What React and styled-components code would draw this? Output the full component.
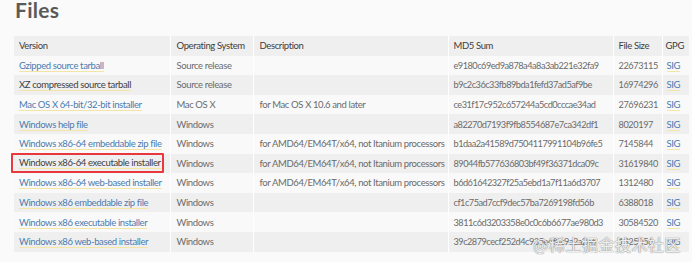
import React from 'react'
import styled, { createGlobalStyle } from 'styled-components'

const Global = createGlobalStyle`
  html, body { margin: 0; padding: 0; background: #fafafa; }
  body { font-family: Lato, "Liberation Sans", sans-serif; }
`

const Page = styled.div`
  width: 692px;
  height: 262px;
  overflow: hidden;
  position: relative;
  padding: 0 3px 0 14px;
  box-sizing: border-box;
`

const Title = styled.h2`
  margin: -3px 0 0 1px;
  height: 39px;
  font-size: 21px;
  line-height: 26px;
  font-weight: 700;
  color: #5a5a5a;
  letter-spacing: 0.3px;
`

const Table = styled.table`
  width: 675px;
  border-collapse: collapse;
  table-layout: fixed;
  font-size: 9.5px;
  letter-spacing: -0.38px;
`

const Row = styled.tr`
  height: 19.6px;
  background: ${p => (p.$shade ? '#efefef' : '#f9f9f9')};
`

const Head = styled.th`
  text-align: left;
  font-weight: 400;
  color: #3d3d3d;
  padding: 0 0 0 ${p => p.$pad || 5}px;
  border-left: 1px solid #fff;
  white-space: nowrap;
  &:first-child { border-left: none; }
`

const Cell = styled.td`
  color: #6b6b6b;
  padding: 0 0 0 ${p => p.$pad || 5}px;
  border-left: 1px solid #fff;
  white-space: nowrap;
  &:first-child { border-left: none; }
`

const NumCell = styled(Cell)`
  font-size: 9.2px;
  letter-spacing: ${p => (p.$tight ? '-0.5px' : '-0.4px')};
`

const Link = styled.a`
  color: ${p => (p.$visited ? '#3f3f3f' : '#4b7bb0')};
  text-decoration: none;
  border-bottom: 1px solid #f2e5a6;
`

const Marked = styled.span`
  display: inline-block;
  position: relative;
  line-height: 12px;
`

const RedBox = styled.span`
  position: absolute;
  left: -8px;
  right: -3px;
  top: -4px;
  bottom: -4px;
  border: 2px solid #e8383d;
  border-radius: 1px;
`

const Watermark = styled.div`
  position: absolute;
  right: 11px;
  bottom: 9px;
  font-family: "Noto Sans CJK SC", sans-serif;
  font-size: 16px;
  line-height: 18px;
  color: rgba(255, 255, 255, 0.85);
  letter-spacing: 0.5px;
  text-shadow: 0 0 1px #8a8a8a, 0 0 1px #8a8a8a;
`

const rows = [
  ['Gzipped source tarball', 'Source release', '', 'e9180c69ed9a878a4a8a3ab221e32fa9', '22673115'],
  ['XZ compressed source tarball', 'Source release', '', 'b9c2c36c33fb89bda1fefd37ad5af9be', '16974296', 'visited'],
  ['Mac OS X 64-bit/32-bit installer', 'Mac OS X', 'for Mac OS X 10.6 and later', 'ce31f17c952c657244a5cd0cccae34ad', '27696231'],
  ['Windows help file', 'Windows', '', 'a82270d7193f9fb8554687e7ca342df1', '8020197'],
  ['Windows x86-64 embeddable zip file', 'Windows', 'for AMD64/EM64T/x64, not Itanium processors', 'b1daa2a41589d7504117991104b96fe5', '7145844'],
  ['Windows x86-64 executable installer', 'Windows', 'for AMD64/EM64T/x64, not Itanium processors', '89044fb577636803bf49f36371dca09c', '31619840', 'marked'],
  ['Windows x86-64 web-based installer', 'Windows', 'for AMD64/EM64T/x64, not Itanium processors', 'b6d61642327f25a5ebd1a7f11a6d3707', '1312480'],
  ['Windows x86 embeddable zip file', 'Windows', '', 'cf1c75ad7ccf9dec57ba7269198fd56b', '6388018'],
  ['Windows x86 executable installer', 'Windows', '', '3811c6d3203358e0c0c6b6677ae980d3', '30584520'],
  ['Windows x86 web-based installer', 'Windows', '', '39c2879cecf252d4c935e4f8c9a2a2e6', '1325056'],
]

const Files = () => {
  return (
    <Page>
      <Global />
      <Title>Files</Title>
      <Table>
        <colgroup>
          <col style={{ width: 156 }} />
          <col style={{ width: 83 }} />
          <col style={{ width: 195 }} />
          <col style={{ width: 165 }} />
          <col style={{ width: 49 }} />
          <col style={{ width: 27 }} />
        </colgroup>
        <thead>
          <Row $shade>
            <Head>Version</Head>
            <Head $pad={6}>Operating System</Head>
            <Head $pad={6}>Description</Head>
            <Head>MD5 Sum</Head>
            <Head>File Size</Head>
            <Head $pad={3}>GPG</Head>
          </Row>
        </thead>
        <tbody>
          {rows.map((r, i) => (
            <Row key={r[0]} $shade={i % 2 === 1}>
              <Cell>
                {r[5] === 'marked' ? (
                  <Marked>
                    <Link $visited>{r[0]}</Link>
                    <RedBox />
                  </Marked>
                ) : (
                  <Link $visited={r[5] === 'visited'}>{r[0]}</Link>
                )}
              </Cell>
              <Cell $pad={6}>{r[1]}</Cell>
              <Cell $pad={6}>{r[2]}</Cell>
              <NumCell $tight>{r[3]}</NumCell>
              <NumCell>{r[4]}</NumCell>
              <Cell $pad={4}><Link>SIG</Link></Cell>
            </Row>
          ))}
        </tbody>
      </Table>
      <Watermark>@稀土掘金技术社区</Watermark>
    </Page>
  )
}

export default Files
